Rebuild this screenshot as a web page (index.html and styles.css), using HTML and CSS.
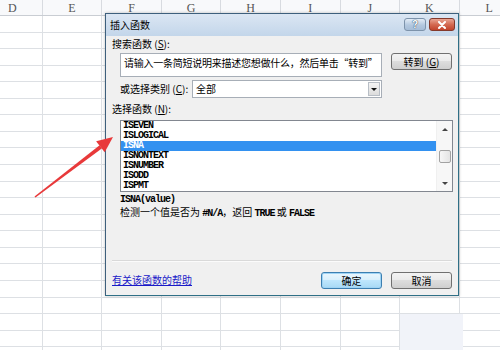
FILE: index.html
```html
<!DOCTYPE html>
<html lang="zh-CN">
<head>
<meta charset="utf-8">
<title>插入函数</title>
<link rel="stylesheet" href="styles.css">
</head>
<body>
<div class="sheet">
  <div class="colhead">
    <div class="ch">D</div><div class="ch">E</div><div class="ch">F</div><div class="ch">G</div><div class="ch">H</div><div class="ch">I</div><div class="ch">J</div><div class="ch">K</div><div class="ch">L</div>
  </div>
  <div class="grid"></div>
</div>
<div class="selblock"></div>

<div class="dialog">
  <div class="titlebar">
    <span class="title">插入函数</span>
    <div class="tbtns">
      <span class="tb help">?</span>
      <span class="tb close"><svg width="10" height="8" viewBox="0 0 10 8"><path d="M2 1 L8 7 M8 1 L2 7" stroke="#fff" stroke-width="2" stroke-linecap="round"/></svg></span>
    </div>
  </div>
  <div class="dbody">
    <div class="lbl">搜索函数 (<u>S</u>):</div>
    <div class="search-row">
      <div class="input"><span class="itext">请输入一条简短说明来描述您想做什么，然后单击“转到”</span></div>
      <div class="btn go">转到 (<u>G</u>)</div>
    </div>
    <div class="cat-row">
      <div class="cat-lbl">或选择类别 (<u>C</u>):</div>
      <div class="select"><span>全部</span><span class="ddbtn"><i class="tri-down"></i></span></div>
    </div>
    <div class="lbl lbl2">选择函数 (<u>N</u>):</div>
    <div class="list">
      <div class="items">
        <div class="item mono">ISEVEN</div>
        <div class="item mono">ISLOGICAL</div>
        <div class="item mono sel">ISNA</div>
        <div class="item mono">ISNONTEXT</div>
        <div class="item mono">ISNUMBER</div>
        <div class="item mono">ISODD</div>
        <div class="item mono">ISPMT</div>
      </div>
      <div class="vscroll">
        <div class="sbtn"><i class="tri-up"></i></div>
        <div class="track"><div class="thumb"></div></div>
        <div class="sbtn"><i class="tri-down small"></i></div>
      </div>
    </div>
    <div class="sig mono">ISNA(value)</div>
    <div class="desc">检测一个值是否为 <span class="mono">#N/A</span>，返回 <span class="mono">TRUE</span> 或 <span class="mono">FALSE</span></div>
    <div class="sep"></div>
    <div class="footer">
      <a class="help-link" href="#">有关该函数的帮助</a>
      <div class="btn ok">确定</div>
      <div class="btn cancel">取消</div>
    </div>
  </div>
</div>

<svg class="arrow" width="500" height="350" viewBox="0 0 500 350">
  <polygon points="35.5,197.6 34.5,196.4 99.6,145.2 101.8,148.4" fill="#e8393a"/>
  <polygon points="113,137 96.1,141.3 104.7,152.3" fill="#e8393a"/>
</svg>
</body>
</html>
```
FILE: styles.css
```css
* { box-sizing: border-box; margin: 0; padding: 0; }
html, body { width: 500px; height: 350px; overflow: hidden; background: #fff; }
body {
  position: relative;
  font-family: "Noto Sans CJK SC", "Liberation Sans", sans-serif;
  font-size: 10px;
  color: #000;
}
u { text-decoration: underline; }

/* spreadsheet */
.sheet { width: 500px; height: 350px; overflow: hidden; }
.colhead {
  display: flex;
  margin-left: -17px;
  height: 16px;
  border-bottom: 1px solid #c9cdd3;
  background: #f8f9fb;
}
.ch {
  flex: 0 0 59.6px;
  border-right: 1px solid #d8dbe0;
  text-align: center;
  font-family: "Liberation Serif", serif;
  font-size: 12px;
  line-height: 16px;
  color: #555;
}
.grid {
  height: 334px;
  background-image:
    repeating-linear-gradient(to bottom, transparent 0 15.56px, #dde0e4 15.56px 16.56px),
    repeating-linear-gradient(to right, transparent 0 58.6px, #dde0e4 58.6px 59.6px);
  background-position: -17px 0;
}
.selblock {
  position: absolute;
  left: 400px; top: 314px;
  width: 63px; height: 36px;
  background: #f1f3f9;
}

/* dialog */
.dialog {
  position: absolute;
  left: 105px; top: 13px;
  width: 354px; height: 283px;
  border: 1px solid #3d5f7c;
  border-bottom-color: #2f6f86;
  border-right-color: #2f6f86;
  background: #f0f0f0;
  box-shadow: 0 0 3px rgba(0,0,0,0.25);
}
.titlebar {
  height: 22px;
  display: flex;
  justify-content: space-between;
  align-items: flex-start;
  padding: 0 3px 0 4px;
  background: linear-gradient(#dbe6f3, #c3d6ea);
}
.title { line-height: 22px; color: #000; }
.tbtns { display: flex; gap: 3px; margin-top: 4px; }
.tb {
  height: 13px;
  border-radius: 3px;
  display: flex; align-items: center; justify-content: center;
}
.help {
  width: 22px;
  border: 1px solid #7d93ab;
  background: linear-gradient(#e3ecf6, #b3c8df 55%, #a6bdd7);
  color: #fff;
  font-family: "Liberation Sans", sans-serif;
  font-weight: bold;
  font-size: 10px;
  text-shadow: 0 0 1px #2a4560, 0 0 1px #2a4560;
}
.close {
  width: 26px;
  border: 1px solid #84392b;
  background: linear-gradient(#eaa593, #d46a52 50%, #c2432c);
}

.dbody { padding: 0 6px 0 6px; }
.lbl { height: 16px; line-height: 16px; }
.search-row { display: flex; align-items: flex-start; margin-top: 1px; padding-left: 8px; }
.input {
  width: 262px; height: 24px;
  border: 1px solid #a7aeb7;
  background: #fff;
  padding: 2px 1px 2px 3px;
  line-height: 13px;
  white-space: nowrap;
  overflow: hidden;
}
.itext { letter-spacing: -0.25px; }
.btn {
  width: 61px; height: 17px;
  border: 1px solid #707070;
  border-radius: 3px;
  background: linear-gradient(#f3f3f3, #ebebeb 45%, #dddddd 50%, #cfcfcf);
  text-align: center;
  line-height: 15px;
}
.go { margin-left: 9px; }

.cat-row { display: flex; height: 18px; margin-top: 3px; padding-left: 8px; }
.cat-lbl { width: 72px; line-height: 18px; }
.select {
  width: 190px; height: 18px;
  border: 1px solid #a7aeb7;
  background: #fff;
  display: flex; justify-content: space-between; align-items: center;
  padding: 0 1px 0 3px;
  line-height: 16px;
}
.ddbtn {
  width: 12px; height: 14px;
  border: 1px solid #b8bec6;
  background: linear-gradient(#f4f4f4, #dcdcdc);
  display: flex; align-items: center; justify-content: center;
}
.tri-down {
  display: block; width: 0; height: 0;
  border-left: 3px solid transparent;
  border-right: 3px solid transparent;
  border-top: 3px solid #111;
}
.tri-down.small { border-top-color: #444; }
.tri-up {
  display: block; width: 0; height: 0;
  border-left: 3px solid transparent;
  border-right: 3px solid transparent;
  border-bottom: 3px solid #444;
}
.lbl2 { height: 18px; line-height: 18px; margin-top: 2px; }

.list {
  display: flex;
  width: 333px; height: 72px;
  margin: 2px 0 0 8px;
  border: 1px solid #828790;
  background: #fff;
}
.items { flex: 1; }
.mono {
  font-family: "Liberation Mono", "DejaVu Sans Mono", monospace;
  font-size: 10px;
  font-weight: bold;
  letter-spacing: -1px;
}
.item { height: 10px; line-height: 10px; padding-left: 2px; white-space: nowrap; }
.item.sel { background: #3391f0; color: #fff; }
.vscroll { width: 16px; display: flex; flex-direction: column; background: #f7f7f7; border-left: 1px solid #f0f0f0; }
.sbtn { height: 16px; display: flex; align-items: center; justify-content: center; }
.track { flex: 1; padding: 13px 1px 0 2px; }
.thumb {
  height: 13px;
  border: 1px solid #a2a2a2;
  border-radius: 2px;
  background: linear-gradient(to right, #f6f6f6, #e4e4e4);
}

.sig { margin: 2px 0 0 8px; height: 12px; line-height: 12px; }
.desc { margin-left: 8px; height: 12px; line-height: 12px; white-space: nowrap; }
.sep { margin-top: 42px; height: 2px; border-top: 1px solid #d9d9d9; border-bottom: 1px solid #fbfbfb; }
.footer { display: flex; align-items: center; height: 16px; margin-top: 10px; }
.help-link { color: #1a1ac8; text-decoration: underline; line-height: 14px; }
.ok {
  margin-left: auto;
  border-color: #3c7fb1;
  box-shadow: inset 0 0 0 1px #9fd4f5;
  background: linear-gradient(#eaf6fd, #d9f0fc 45%, #bee6fd 50%, #a7d9f5);
}
.cancel { margin-left: 9px; }

.arrow { position: absolute; left: 0; top: 0; pointer-events: none; }
```
